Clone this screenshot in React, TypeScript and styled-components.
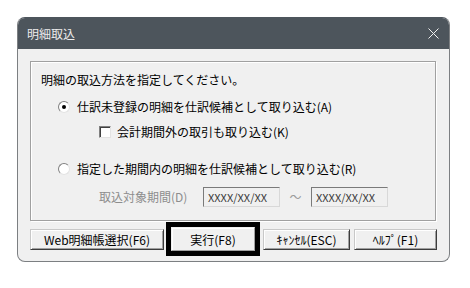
import styled, { createGlobalStyle } from 'styled-components';

const GlobalStyle = createGlobalStyle`
  body {
    margin: 0;
    background: #ffffff;
    font-family: "Noto Sans CJK JP", "Noto Sans", sans-serif;
    font-size: 12px;
    color: #000000;
  }
`;

const Page = styled.div`
  padding: 17px 0 0 17px;
`;

const Window = styled.div`
  width: 433px;
  height: 245px;
  box-sizing: border-box;
  border: 1px solid #7c7f82;
  border-top-color: #4d555c;
  border-radius: 8px;
  background: #f0f0f0;
  overflow: hidden;
  display: flex;
  flex-direction: column;
`;

const TitleBar = styled.div`
  height: 31px;
  background: #4d555c;
  color: #ececec;
  display: flex;
  align-items: center;
  justify-content: space-between;
  padding: 0 10px 0 9px;
  font-size: 12px;
  line-height: 16px;
`;

const GroupBox = styled.div`
  margin: 12px 0 0 12px;
  width: 406px;
  height: 160px;
  box-sizing: border-box;
  border: 1px solid #a0a0a0;
  box-shadow: inset 1px 1px 0 #ffffff, 1px 1px 0 #ffffff;
  padding: 10px 10px 0 10px;
  display: flex;
  flex-direction: column;
`;

const Line = styled.div<{ $top: number; $indent: number; $gap?: number }>`
  display: flex;
  align-items: center;
  height: 16px;
  line-height: 16px;
  white-space: nowrap;
  margin-top: ${(p) => p.$top}px;
  padding-left: ${(p) => p.$indent}px;
  gap: ${(p) => p.$gap ?? 0}px;
`;

const DateRow = styled(Line)`
  height: 20px;
`;

const Radio = styled.span<{ $checked?: boolean }>`
  position: relative;
  width: 12px;
  height: 12px;
  box-sizing: border-box;
  border-radius: 50%;
  background: #ffffff;
  border: 1px solid;
  border-color: #808080 #e3e3e3 #e3e3e3 #808080;
  flex-shrink: 0;

  &::after {
    content: '';
    display: ${(p) => (p.$checked ? 'block' : 'none')};
    position: absolute;
    left: 3px;
    top: 3px;
    width: 4px;
    height: 4px;
    border-radius: 50%;
    background: #000000;
  }
`;

const CheckBox = styled.span`
  width: 12px;
  height: 12px;
  box-sizing: border-box;
  background: #ffffff;
  border: 1px solid;
  border-color: #808080 #e3e3e3 #e3e3e3 #808080;
  box-shadow: inset 1px 1px 0 #404040;
  flex-shrink: 0;
`;

const Label = styled.span<{ $disabled?: boolean }>`
  color: ${(p) => (p.$disabled ? '#8d8d8d' : '#000000')};
`;

const DateLabel = styled(Label)`
  width: 104px;
`;

const DateBox = styled.div`
  width: 77px;
  height: 20px;
  box-sizing: border-box;
  border: 1px solid;
  border-color: #7a7a7a #d8d8d8 #d8d8d8 #7a7a7a;
  background: #f0f0f0;
  color: #3c3c3c;
  padding-left: 4px;
  line-height: 18px;
  font-size: 11px;
`;

const Tilde = styled.span`
  width: 31px;
  text-align: center;
  color: #9a9a9a;
`;

const ButtonRow = styled.div`
  margin: 1px 0 0 12px;
  height: 34px;
  display: flex;
  align-items: center;
`;

const Button = styled.button<{ $w: number; $ml?: number }>`
  width: ${(p) => p.$w}px;
  height: 21px;
  margin-left: ${(p) => p.$ml ?? 0}px;
  box-sizing: border-box;
  padding: 0;
  font: inherit;
  font-size: 12px;
  line-height: 17px;
  color: #000000;
  background: #f0f0f0;
  border: 1px solid;
  border-color: #c8c8c8 #3c3c3c #3c3c3c #c8c8c8;
  box-shadow: inset 1px 1px 0 #ffffff, inset -1px -1px 0 #a0a0a0;
  white-space: nowrap;
`;

const DefaultFrame = styled.div`
  width: 94px;
  height: 34px;
  box-sizing: border-box;
  margin-left: 2px;
  border: 5px solid #000000;
  display: flex;
  align-items: center;
  justify-content: center;
  background: #f0f0f0;
`;

const DefaultButton = styled(Button)`
  height: 24px;
  border-color: #f0f0f0 #a0a0a0 #a0a0a0 #f0f0f0;
  box-shadow: inset 1px 1px 0 #ffffff;
`;

function CloseIcon() {
  return (
    <svg width="11" height="11" viewBox="0 0 11 11">
      <path d="M0.5 0.5 L10.5 10.5 M10.5 0.5 L0.5 10.5" stroke="#f0f0f0" strokeWidth="1" />
    </svg>
  );
}

export default function App() {
  return (
    <>
      <GlobalStyle />
      <Page>
        <Window>
          <TitleBar>
            <span>明細取込</span>
            <CloseIcon />
          </TitleBar>
          <GroupBox>
            <Line $top={0} $indent={0}>
              <Label>明細の取込方法を指定してください。</Label>
            </Line>
            <Line $top={11} $indent={17} $gap={7}>
              <Radio $checked />
              <Label>仕訳未登録の明細を仕訳候補として取り込む(A)</Label>
            </Line>
            <Line $top={9} $indent={58} $gap={6}>
              <CheckBox />
              <Label>会計期間外の取引も取り込む(K)</Label>
            </Line>
            <Line $top={21} $indent={17} $gap={7}>
              <Radio />
              <Label>指定した期間内の明細を仕訳候補として取り込む(R)</Label>
            </Line>
            <DateRow $top={10} $indent={58}>
              <DateLabel $disabled>取込対象期間(D)</DateLabel>
              <DateBox>XXXX/XX/XX</DateBox>
              <Tilde>～</Tilde>
              <DateBox>XXXX/XX/XX</DateBox>
            </DateRow>
          </GroupBox>
          <ButtonRow>
            <Button $w={134}>Web明細帳選択(F6)</Button>
            <DefaultFrame>
              <DefaultButton $w={84}>実行(F8)</DefaultButton>
            </DefaultFrame>
            <Button $w={87} $ml={3}>ｷｬﾝｾﾙ(ESC)</Button>
            <Button $w={83} $ml={4}>ﾍﾙﾌﾟ(F1)</Button>
          </ButtonRow>
        </Window>
      </Page>
    </>
  );
}
